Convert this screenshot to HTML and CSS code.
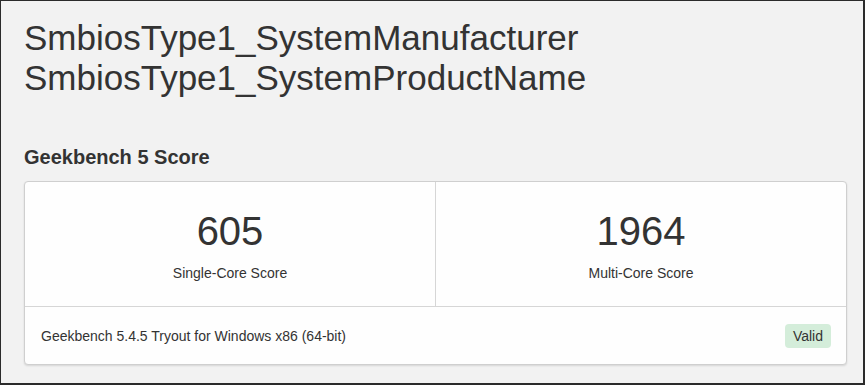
FILE: index.html
```html
<!DOCTYPE html>
<html lang="en">
<head>
    <meta charset="UTF-8">
    <title>Geekbench 5 Score</title>
    <link rel="stylesheet" href="styles.css">
</head>
<body>
<div class="page">
    <h1 class="title">SmbiosType1_SystemManufacturer<br>SmbiosType1_SystemProductName</h1>
    <h3 class="section-title">Geekbench 5 Score</h3>
    <div class="card">
        <div class="scores">
            <div class="score">
                <div class="score-value">605</div>
                <div class="score-name">Single-Core Score</div>
            </div>
            <div class="score">
                <div class="score-value">1964</div>
                <div class="score-name">Multi-Core Score</div>
            </div>
        </div>
        <div class="card-footer">
            <span class="version">Geekbench 5.4.5 Tryout for Windows x86 (64-bit)</span>
            <span class="badge">Valid</span>
        </div>
    </div>
</div>
</body>
</html>
```
FILE: styles.css
```css
* {
    margin: 0;
    padding: 0;
    box-sizing: border-box;
}

body {
    background: #f2f2f2;
    font-family: "Liberation Sans", Arial, sans-serif;
    color: #333;
}

.page {
    width: 865px;
    height: 385px;
    border: 1px solid #2b2b2b;
    border-right-width: 2px;
    border-bottom-width: 2px;
    padding: 17px 16px 0 23px;
}

.title {
    font-size: 35px;
    font-weight: normal;
    line-height: 40px;
}

.section-title {
    margin-top: 47px;
    font-size: 20px;
    font-weight: bold;
    line-height: 24px;
}

.card {
    margin-top: 12px;
    background: #fefefe;
    border: 1px solid #cfcfcf;
    border-radius: 4px;
    box-shadow: 0 1px 2px rgba(0, 0, 0, 0.12);
}

.scores {
    display: flex;
    height: 125px;
    border-bottom: 1px solid #d6d6d6;
}

.score {
    flex: 1;
    text-align: center;
    padding-top: 26px;
}

.score + .score {
    border-left: 1px solid #d6d6d6;
}

.score-value {
    font-size: 40px;
    line-height: 46px;
}

.score-name {
    margin-top: 10px;
    font-size: 14px;
    line-height: 18px;
}

.card-footer {
    display: flex;
    align-items: center;
    justify-content: space-between;
    height: 57px;
    padding: 0 15px 0 16px;
    font-size: 14px;
}

.badge {
    background: #d4edda;
    border-radius: 4px;
    padding: 4px 8px;
    font-size: 14px;
    line-height: 16px;
}
```
